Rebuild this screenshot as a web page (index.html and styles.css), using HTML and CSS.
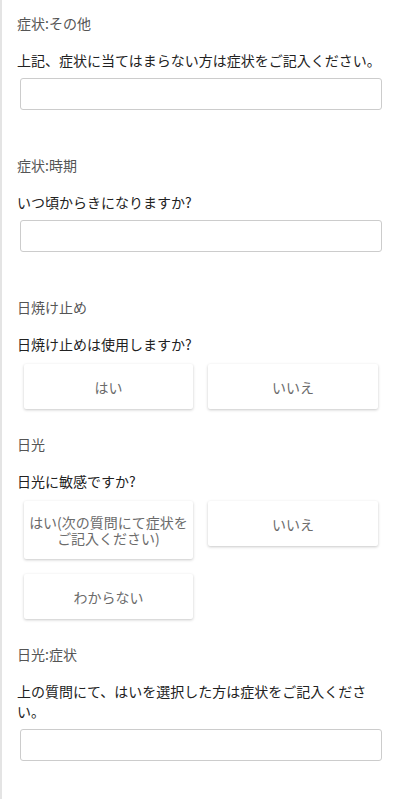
FILE: index.html
```html
<!DOCTYPE html>
<html lang="ja">
<head>
  <meta charset="UTF-8">
  <meta name="viewport" content="width=device-width, initial-scale=1.0">
  <title>問診票</title>
  <link rel="stylesheet" href="styles.css">
</head>
<body>
  <div class="form">
    <!-- 症状:その他 -->
    <div class="field">
      <p class="field-title">症状:その他</p>
      <p class="field-question">上記、症状に当てはまらない方は症状をご記入ください。</p>
      <input class="text-input" type="text">
    </div>

    <!-- 症状:時期 -->
    <div class="field">
      <p class="field-title">症状:時期</p>
      <p class="field-question">いつ頃からきになりますか?</p>
      <input class="text-input" type="text">
    </div>

    <!-- 日焼け止め -->
    <div class="field">
      <p class="field-title">日焼け止め</p>
      <p class="field-question">日焼け止めは使用しますか?</p>
      <div class="choices">
        <button class="choice" type="button">はい</button>
        <button class="choice" type="button">いいえ</button>
      </div>
    </div>

    <!-- 日光 -->
    <div class="field">
      <p class="field-title">日光</p>
      <p class="field-question">日光に敏感ですか?</p>
      <div class="choices">
        <button class="choice" type="button">はい(次の質問にて症状をご記入ください)</button>
        <button class="choice" type="button">いいえ</button>
        <button class="choice" type="button">わからない</button>
      </div>
    </div>

    <!-- 日光:症状 -->
    <div class="field">
      <p class="field-title">日光:症状</p>
      <p class="field-question">上の質問にて、はいを選択した方は症状をご記入ください。</p>
      <input class="text-input" type="text">
    </div>
  </div>
</body>
</html>
```

FILE: styles.css
```css
/* RESET */
* {
  margin: 0;
  padding: 0;
  box-sizing: border-box;
}

body {
  font-family: "Noto Sans CJK JP", "Noto Sans", sans-serif;
  background-color: #fff;
  color: #222;
}

/* Contenedor del formulario */
.form {
  min-height: 799px;
  border-left: 2px solid #e4e4e4;
  padding: 0 17px 0 15px;
}

.field {
  padding: 13px 0 11px;
}

.field-title {
  font-size: 14px;
  line-height: 20px;
  color: #555;
}

.field-question {
  margin-top: 17px;
  font-size: 14px;
  line-height: 20px;
  color: #222;
}

/* Campo de texto */
.text-input {
  display: block;
  width: 362px;
  height: 32px;
  margin: 8px 0 21px 3px;
  border: 1px solid #ccc;
  border-radius: 3px;
  background: #fff;
  font: inherit;
  outline: none;
}

/* Botones de opción */
.choices {
  display: grid;
  grid-template-columns: 169px 170px;
  column-gap: 15px;
  row-gap: 15px;
  align-items: start;
  margin: 10px 0 1px 7px;
}

.choice {
  display: flex;
  align-items: center;
  justify-content: center;
  min-height: 45px;
  padding: 13px 3px;
  border: none;
  border-radius: 2px;
  background: #fff;
  box-shadow: 0 1px 3px rgba(0, 0, 0, 0.22);
  font-family: inherit;
  font-size: 14px;
  line-height: 16px;
  color: #6b6b6b;
  text-align: center;
  cursor: pointer;
}
```
